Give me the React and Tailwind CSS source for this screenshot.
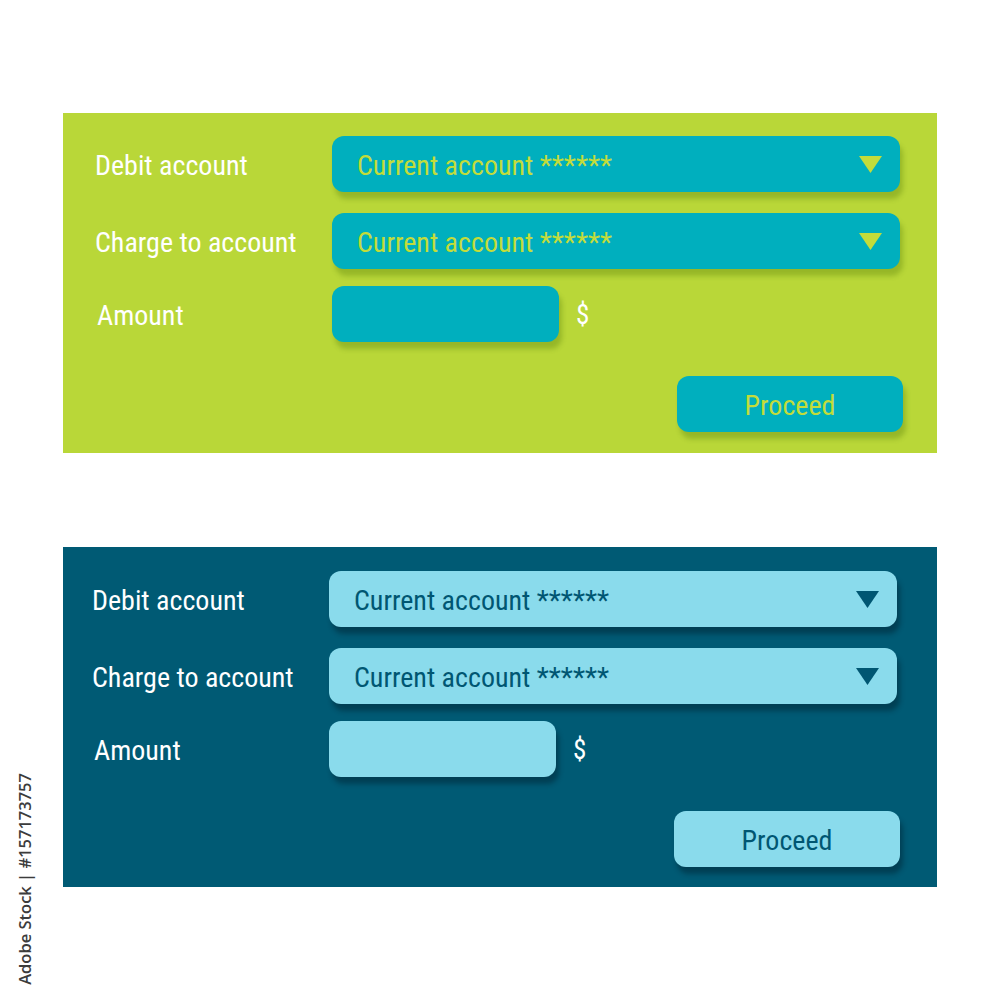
import { useState } from 'react';

const themes = {
  lime: {
    panel: 'bg-[#b9d738]',
    field: 'bg-[#00afbe] shadow-[3px_7px_5px_rgba(70,110,0,0.3)]',
    fieldText: 'text-[#c3dc3a]',
    arrow: '#c3dc3a',
  },
  navy: {
    panel: 'bg-[#005a74]',
    field: 'bg-[#8adbec] shadow-[3px_7px_5px_rgba(0,20,35,0.38)]',
    fieldText: 'text-[#005672]',
    arrow: '#005672',
  },
};

function Arrow({ color }) {
  return (
    <svg width="23" height="17" viewBox="0 0 23 17" className="shrink-0">
      <path d="M0 0 H23 L11.5 17 Z" fill={color} />
    </svg>
  );
}

function Select({ t, value }) {
  return (
    <div className={`h-[56px] w-[568px] rounded-[12px] flex items-center justify-between pl-[25px] pr-[18px] ${t.field}`}>
      <span className={`text-[28px] leading-none pt-[3px] [font-stretch:81%] ${t.fieldText}`}>{value}</span>
      <Arrow color={t.arrow} />
    </div>
  );
}

function Label({ children }) {
  return <div className="w-[237px] text-white text-[28px] leading-none pt-[3px] [font-stretch:81%]">{children}</div>;
}

function TransferPanel({ theme, padL, padT }) {
  const t = themes[theme];
  const [amount, setAmount] = useState('');
  return (
    <div className={`w-[874px] h-[340px] ${t.panel} ${padL} ${padT} flex flex-col`}>
      <div className="flex items-center">
        <Label>Debit account</Label>
        <Select t={t} value="Current account ******" />
      </div>
      <div className="flex items-center mt-[21px]">
        <Label>Charge to account</Label>
        <Select t={t} value="Current account ******" />
      </div>
      <div className="flex items-center mt-[17px]">
        <Label><span className="pl-[2px]">Amount</span></Label>
        <input
          value={amount}
          onChange={e => setAmount(e.target.value)}
          className={`h-[56px] w-[227px] rounded-[12px] outline-none px-4 text-[27px] ${t.field} ${t.fieldText}`}
        />
        <span className="ml-[17px] pt-[3px] text-white text-[27px] leading-none [font-stretch:81%]">$</span>
      </div>
      <div className="flex justify-end w-[808px] mt-[34px]">
        <button className={`h-[56px] w-[226px] rounded-[12px] pt-[3px] text-[28px] leading-none [font-stretch:81%] ${t.field} ${t.fieldText}`}>
          Proceed
        </button>
      </div>
    </div>
  );
}

export default function App() {
  return (
    <div className="relative w-[1000px] h-[1000px] bg-white pl-[63px] pt-[113px] flex flex-col gap-[94px] font-['Roboto',sans-serif]">
      <TransferPanel theme="lime" padL="pl-[32px]" padT="pt-[23px]" />
      <TransferPanel theme="navy" padL="pl-[29px]" padT="pt-[24px]" />

      {/* stock stamp along the left edge */}
      <div className="absolute left-[13px] bottom-[15px] [writing-mode:vertical-rl] rotate-180 text-[#3c3c3c] text-[16.5px] font-semibold font-['Open_Sans',sans-serif] whitespace-nowrap">
        Adobe Stock | #157173757
      </div>
    </div>
  );
}
